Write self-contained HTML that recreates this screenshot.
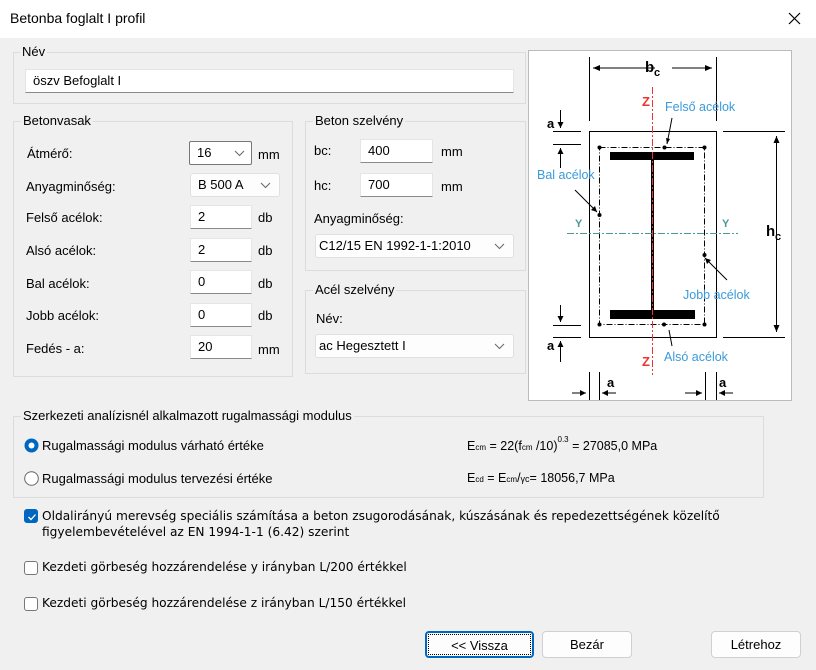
<!DOCTYPE html>
<html><head><meta charset="utf-8"><style>
*{margin:0;padding:0;box-sizing:border-box}
body{width:816px;height:670px;background:#f0f0f0;font-family:"Liberation Sans",Arial,sans-serif;font-size:13px;color:#000;position:relative;overflow:hidden}
.a{position:absolute;white-space:nowrap}
.title{position:absolute;left:0;top:0;width:816px;height:38px;background:#fff}
.g{position:absolute;border:1px solid #dcdcdc}
.gl{position:absolute;background:#f0f0f0;padding:0 2px;line-height:14px}
.in{position:absolute;background:#fff;border:1px solid #e5e5e5;border-bottom:1px solid #8a8a8a;padding-left:7px;line-height:22px}
.cb{position:absolute;background:#fdfdfd;border:1px solid #e0e0e0;border-radius:3px;padding-left:7px;line-height:22px}
.cb svg{position:absolute;right:8px;top:8px}
.btn{position:absolute;background:#fdfdfd;border:1px solid #d0d0d0;border-radius:4px;text-align:center;line-height:25px}
.chk{position:absolute;width:14px;height:14px;border:1px solid #777;border-radius:3px;background:#fff}
.t{font-family:"DejaVu Sans",sans-serif;font-size:12.2px}
</style></head><body>
<div class="title"></div>
<div class="a" style="left:10px;top:10px;font-size:14px">Betonba foglalt I profil</div>
<svg class="a" style="left:788px;top:12px" width="13" height="13"><path d="M1 1L12 12M12 1L1 12" stroke="#000" stroke-width="1.2"/></svg>

<div class="g" style="left:13px;top:52px;width:513px;height:52px"></div>
<div class="gl" style="left:20px;top:45px">Név</div>
<div class="in" style="left:25px;top:69px;width:489px;height:24px">öszv Befoglalt I</div>

<div class="g" style="left:13px;top:121px;width:280px;height:256px"></div>
<div class="gl" style="left:21px;top:114px">Betonvasak</div>
<div class="a" style="left:27px;top:146px">Átmérő:</div>
<div class="in" style="left:189px;top:141px;width:63px;height:24px;border:1px solid #777;border-radius:2px">16<svg style="position:absolute;right:6px;top:8px" width="11" height="7"><path d="M1 1L5.5 5.5L10 1" fill="none" stroke="#666"/></svg></div>
<div class="a" style="left:258px;top:147px">mm</div>
<div class="a" style="left:26px;top:179px">Anyagminőség:</div>
<div class="cb" style="left:190px;top:173px;width:90px;height:24px">B 500 A<svg width="11" height="7"><path d="M1 1L5.5 5.5L10 1" fill="none" stroke="#666"/></svg></div>
<div class="a" style="left:26px;top:210px">Felső acélok:</div>
<div class="in" style="left:190px;top:205px;width:62px;height:24px">2</div><div class="a" style="left:258px;top:210px">db</div>
<div class="a" style="left:26px;top:243px">Alsó acélok:</div>
<div class="in" style="left:190px;top:238px;width:62px;height:24px">2</div><div class="a" style="left:258px;top:243px">db</div>
<div class="a" style="left:26px;top:276px">Bal acélok:</div>
<div class="in" style="left:190px;top:270px;width:62px;height:24px">0</div><div class="a" style="left:258px;top:276px">db</div>
<div class="a" style="left:26px;top:308px">Jobb acélok:</div>
<div class="in" style="left:190px;top:303px;width:62px;height:24px">0</div><div class="a" style="left:258px;top:308px">db</div>
<div class="a" style="left:26px;top:341px">Fedés - a:</div>
<div class="in" style="left:190px;top:335px;width:62px;height:24px">20</div><div class="a" style="left:258px;top:342px">mm</div>

<div class="g" style="left:305px;top:121px;width:221px;height:150px"></div>
<div class="gl" style="left:313px;top:114px">Beton szelvény</div>
<div class="a" style="left:314px;top:143px">bc:</div>
<div class="in" style="left:360px;top:139px;width:73px;height:24px">400</div><div class="a" style="left:441px;top:144px">mm</div>
<div class="a" style="left:314px;top:178px">hc:</div>
<div class="in" style="left:360px;top:173px;width:73px;height:24px">700</div><div class="a" style="left:441px;top:179px">mm</div>
<div class="a" style="left:314px;top:211px">Anyagminőség:</div>
<div class="cb" style="left:315px;top:234px;width:199px;height:24px;padding-left:3px">C12/15 EN 1992-1-1:2010<svg width="11" height="7"><path d="M1 1L5.5 5.5L10 1" fill="none" stroke="#666"/></svg></div>

<div class="g" style="left:305px;top:290px;width:221px;height:84px"></div>
<div class="gl" style="left:313px;top:283px">Acél szelvény</div>
<div class="a" style="left:316px;top:311px">Név:</div>
<div class="cb" style="left:315px;top:334px;width:199px;height:24px;padding-left:3px">ac Hegesztett I<svg width="11" height="7"><path d="M1 1L5.5 5.5L10 1" fill="none" stroke="#666"/></svg></div>

<svg class="a" style="left:528px;top:50px" width="264" height="351" viewBox="528 50 264 351" font-family="Liberation Sans,Arial,sans-serif">
<rect x="528.5" y="50.5" width="263" height="350" fill="#fff" stroke="#bbb"/>
<g stroke="#000" stroke-width="1" fill="none">
<rect x="589.5" y="131.5" width="127" height="206"/>
<path d="M589.5 57V121M716.5 57V121M723 131.5H785M723 337.5H785M776.5 136V332M593 68H655M672 68H712"/>
<path d="M553 131.5H581M553 144.5H581M553 325.5H581M553 337.5H581M560.5 110V128M560.5 148V168M560.5 305V322M560.5 341V362"/>
<path d="M589.5 372V400M599.5 372V400M705.5 372V400M716.5 372V400M572 393H586M602 393H616M685 393H702M719 393H733"/>
<rect x="599.5" y="147.5" width="105" height="177" stroke-dasharray="6 2 1 2"/>
<path d="M575 190L597 212M705 258L727 280M672 118L667 144M669 330L672 346"/>
</g>
<g fill="#000">
<path d="M593 68l7-3v6zM712 68l-7-3v6zM776.5 136l-3 7h6zM776.5 332l-3-7h6zM560.5 128l-3-6h6zM560.5 148l-3 6h6zM560.5 322l-3-6h6zM560.5 341l-3 6h6zM586 393l-6-3v6zM602 393l6-3v6zM702 393l-6-3v6zM719 393l6-3v6zM597 212l-2-6-4 4zM705 258l6 2-4 4zM667 144l-1-6 4 1z"/>
<rect x="610" y="152" width="84" height="8"/><rect x="610" y="310" width="85" height="9"/>
<rect x="651" y="160" width="3" height="150"/>
<circle cx="599.5" cy="147.5" r="2"/><circle cx="704.5" cy="147.5" r="2"/><circle cx="664.5" cy="147.5" r="2"/>
<circle cx="599.5" cy="324.5" r="2"/><circle cx="704.5" cy="324.5" r="2"/><circle cx="664" cy="324.5" r="2"/>
<circle cx="599.5" cy="215" r="2"/><circle cx="704.5" cy="255" r="2"/>
</g>
<path d="M652.5 87V375" stroke="#e33" stroke-dasharray="7 2 2 2"/>
<path d="M567 233.5H738" stroke="#4a9a9a" stroke-dasharray="7 2 2 2"/>
<text x="645" y="72" font-size="15" font-weight="bold">b</text><text x="654" y="76" font-size="11" font-weight="bold">c</text>
<text x="766" y="236" font-size="15" font-weight="bold">h</text><text x="775" y="240" font-size="11" font-weight="bold">c</text>
<g font-size="13" font-weight="bold"><text x="547" y="128">a</text><text x="547" y="350">a</text><text x="607" y="387">a</text><text x="719" y="387">a</text></g>
<g font-size="13" fill="#e33" font-weight="bold"><text x="642" y="106">Z</text><text x="642" y="366">Z</text></g>
<g font-size="11" fill="#4a9a9a" font-weight="bold"><text x="575" y="227">Y</text><text x="722" y="227">Y</text></g>
<g font-size="12.5" fill="#3a9ad9"><text x="665" y="111">Felső acélok</text><text x="537" y="179">Bal acélok</text><text x="683" y="299">Jobb acélok</text><text x="664" y="361">Alsó acélok</text></g>
</svg>

<div class="g" style="left:13px;top:416px;width:751px;height:82px"></div>
<div class="gl" style="left:21px;top:409px">Szerkezeti analízisnél alkalmazott rugalmassági modulus</div>
<svg class="a" style="left:24px;top:438px" width="15" height="15"><circle cx="7.5" cy="7.5" r="7" fill="#0067c0"/><circle cx="7.5" cy="7.5" r="3" fill="#fff"/></svg>
<div class="a" style="left:42px;top:438px">Rugalmassági modulus várható értéke</div>
<svg class="a" style="left:24px;top:471px" width="15" height="15"><circle cx="7.5" cy="7.5" r="6.8" fill="#fff" stroke="#666"/></svg>
<div class="a" style="left:42px;top:471px">Rugalmassági modulus tervezési értéke</div>
<div class="a" style="left:467px;top:438px;font-size:12.5px">E<span style="font-size:8px">cm</span> = 22(f<span style="font-size:8px">cm</span> /10)<sup style="font-size:8px;position:relative;top:-3px">0.3</sup> = 27085,0 MPa</div>
<div class="a" style="left:467px;top:471px;font-size:12.5px">E<span style="font-size:8px">cd</span> = E<span style="font-size:8px">cm</span>/<span style="font-size:9px">γc</span>= 18056,7 MPa</div>

<div class="chk" style="left:24px;top:509px;background:#0067c0;border-color:#0067c0"><svg style="position:absolute;left:2px;top:2px" width="10" height="10"><path d="M1.5 5L4 7.5L8.5 2.5" fill="none" stroke="#fff" stroke-width="1.3"/></svg></div>
<div class="a t" style="left:42px;top:508px;line-height:16px">Oldalirányú merevség speciális számítása a beton zsugorodásának, kúszásának és repedezettségének közelítő<br>figyelembevételével az EN 1994-1-1 (6.42) szerint</div>
<div class="chk" style="left:24px;top:561px"></div>
<div class="a t" style="left:42px;top:560px">Kezdeti görbeség hozzárendelése y irányban L/200 értékkel</div>
<div class="chk" style="left:24px;top:597px"></div>
<div class="a t" style="left:42px;top:596px">Kezdeti görbeség hozzárendelése z irányban L/150 értékkel</div>

<div class="btn" style="left:425px;top:631px;width:109px;height:27px;border:2px solid #0067c0"><div style="position:absolute;left:1px;top:1px;right:1px;bottom:1px;border:1px dotted #000;line-height:21px">&lt;&lt; Vissza</div></div>
<div class="btn" style="left:542px;top:631px;width:90px;height:27px">Bezár</div>
<div class="btn" style="left:711px;top:631px;width:90px;height:27px">Létrehoz</div>
</body></html>
